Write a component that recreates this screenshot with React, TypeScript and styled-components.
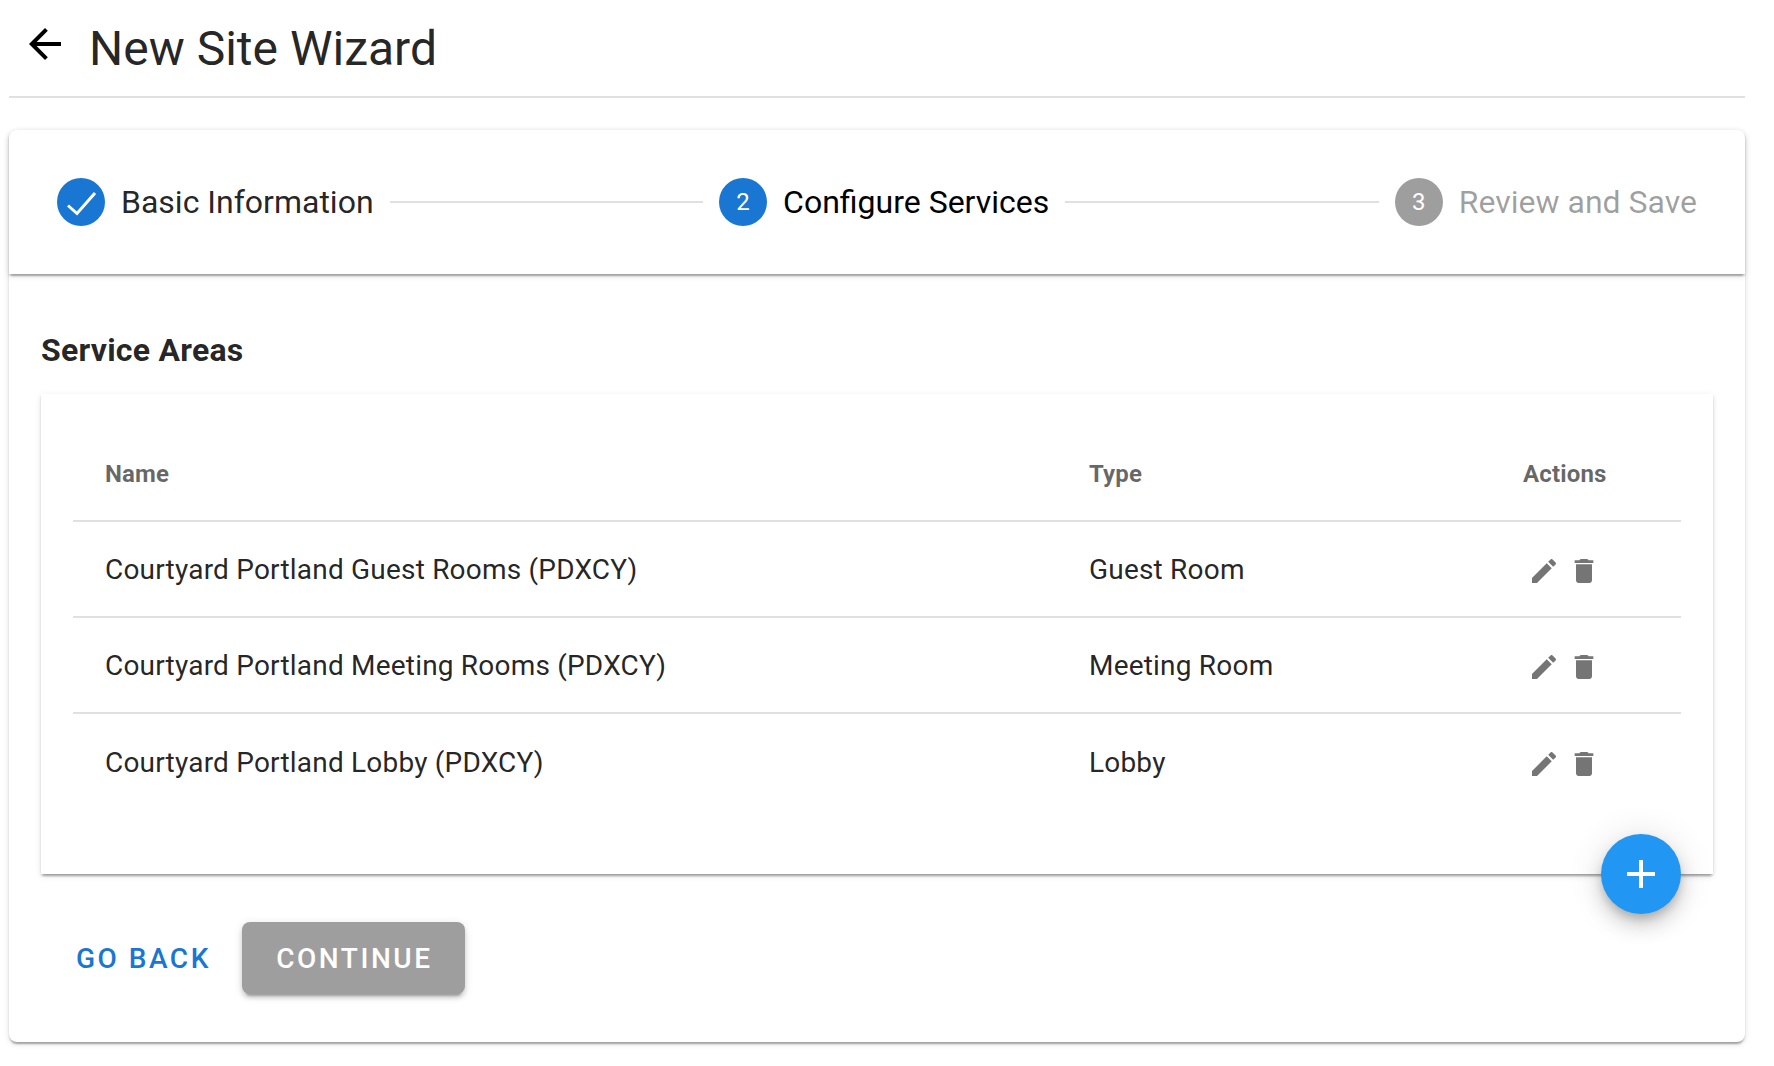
import React from "react";
import styled, { createGlobalStyle } from "styled-components";

const GlobalStyle = createGlobalStyle`
  html, body {
    margin: 0;
    padding: 0;
    background: #fff;
    font-family: Roboto, "Liberation Sans", sans-serif;
    color: rgba(0, 0, 0, 0.87);
  }
`;

const paperShadow = `0 4px 2px -2px rgba(0,0,0,.2), 0 2px 2px 0 rgba(0,0,0,.14), 0 2px 6px 0 rgba(0,0,0,.12)`;

const Page = styled.div`
  box-sizing: border-box;
  width: 1774px;
  height: 1066px;
  padding: 0 29px 0 9px;
  overflow: hidden;
`;

const Header = styled.header`
  display: flex;
  align-items: center;
  height: 96px;
  padding-left: 12px;
  border-bottom: 2px solid #e0e0e0;
  box-sizing: content-box;
`;

const BackIcon = styled.svg`
  width: 48px;
  height: 48px;
  margin-top: -8px;
  fill: #000;
`;

const PageTitle = styled.h1`
  margin: 2px 0 0 20px;
  font-size: 48px;
  font-weight: 400;
  line-height: 96px;
`;

const Wizard = styled.section`
  margin-top: 32px;
  height: 912px;
  border-radius: 8px;
  background: #fff;
  box-shadow: ${paperShadow};
`;

const Stepper = styled.nav`
  display: flex;
  align-items: center;
  box-sizing: border-box;
  height: 144px;
  padding: 0 48px;
  border-radius: 8px 8px 0 0;
  box-shadow: ${paperShadow};
`;

const Step = styled.div`
  display: flex;
  align-items: center;
  gap: 16px;
`;

const StepCircle = styled.div<{ $active: boolean }>`
  display: flex;
  align-items: center;
  justify-content: center;
  width: 48px;
  height: 48px;
  border-radius: 50%;
  font-size: 24px;
  color: #fff;
  background: ${(p) => (p.$active ? "#1976d2" : "#9e9e9e")};
`;

const StepLabel = styled.span<{ $state: "done" | "active" | "todo" }>`
  font-size: 32px;
  line-height: 48px;
  white-space: nowrap;
  color: ${(p) =>
    p.$state === "active"
      ? "#000"
      : p.$state === "done"
      ? "rgba(0,0,0,.87)"
      : "rgba(0,0,0,.38)"};
`;

const Connector = styled.div`
  flex: 1;
  height: 2px;
  margin: 0 16px;
  background: #e0e0e0;
`;

const Content = styled.div`
  padding: 52px 32px 0;
`;

const SectionTitle = styled.h2`
  margin: 0 0 20px;
  font-size: 32px;
  font-weight: 700;
  line-height: 48px;
  letter-spacing: 0.24px;
`;

const TableCard = styled.div`
  position: relative;
  box-sizing: border-box;
  height: 480px;
  padding: 32px 32px 0;
  background: #fff;
  box-shadow: ${paperShadow};
`;

const Row = styled.div<{ $head?: boolean }>`
  display: grid;
  grid-template-columns: 984px 434px 1fr;
  align-items: center;
  box-sizing: border-box;
  height: 96px;
  padding: ${(p) => (p.$head ? "2px" : "0")} 0 0 32px;
  border-bottom: 2px solid #e0e0e0;
  font-size: ${(p) => (p.$head ? "24px" : "28px")};
  font-weight: ${(p) => (p.$head ? 700 : 400)};
  letter-spacing: ${(p) => (p.$head ? "0.17px" : "0.2px")};
  color: ${(p) => (p.$head ? "rgba(0,0,0,.6)" : "rgba(0,0,0,.87)")};

  &:last-of-type {
    border-bottom: none;
  }
`;

const Actions = styled.div`
  display: flex;
  gap: 8px;
  padding: 4px 0 0 5px;
`;

const ActionIcon = styled.svg`
  width: 32px;
  height: 32px;
  fill: #757575;
`;

const Fab = styled.button`
  position: absolute;
  right: 32px;
  bottom: -40px;
  display: flex;
  align-items: center;
  justify-content: center;
  width: 80px;
  height: 80px;
  padding: 0;
  border: none;
  border-radius: 50%;
  background: #2196f3;
  box-shadow: 0 6px 10px -2px rgba(0,0,0,.2), 0 12px 20px 0 rgba(0,0,0,.14), 0 2px 36px 0 rgba(0,0,0,.12);
`;

const FabIcon = styled.svg`
  width: 48px;
  height: 48px;
  fill: #fff;
`;

const Buttons = styled.div`
  display: flex;
  align-items: center;
  gap: 31px;
  margin-top: 48px;
  padding-left: 35px;
`;

const TextButton = styled.button`
  padding: 0;
  border: none;
  background: none;
  font: 500 28px Roboto, sans-serif;
  letter-spacing: 2.5px;
  color: #1976d2;
`;

const ContainedButton = styled.button`
  width: 223px;
  height: 72px;
  padding: 0 0 0 2px;
  border: none;
  border-radius: 8px;
  background: #9e9e9e;
  font: 500 28px Roboto, sans-serif;
  letter-spacing: 2.55px;
  color: #fff;
  box-shadow: 0 6px 2px -4px rgba(0,0,0,.2), 0 4px 4px 0 rgba(0,0,0,.14), 0 2px 10px 0 rgba(0,0,0,.12);
`;

const areas = [
  { name: "Courtyard Portland Guest Rooms (PDXCY)", type: "Guest Room" },
  { name: "Courtyard Portland Meeting Rooms (PDXCY)", type: "Meeting Room" },
  { name: "Courtyard Portland Lobby (PDXCY)", type: "Lobby" },
];

const App = () => {
  return (
    <Page>
      <GlobalStyle />
      <Header>
        <BackIcon viewBox="0 0 24 24">
          <path d="M20 11H7.83l5.59-5.59L12 4l-8 8 8 8 1.41-1.41L7.83 13H20v-2z" />
        </BackIcon>
        <PageTitle>New Site Wizard</PageTitle>
      </Header>
      <Wizard>
        <Stepper>
          <Step>
            <StepCircle $active>
              <svg width="48" height="48" viewBox="0 0 48 48">
                <path d="M11 27.5l9 8 18-20.500" fill="none" stroke="#fff" strokeWidth="3" />
              </svg>
            </StepCircle>
            <StepLabel $state="done">Basic Information</StepLabel>
          </Step>
          <Connector />
          <Step>
            <StepCircle $active>2</StepCircle>
            <StepLabel $state="active">Configure Services</StepLabel>
          </Step>
          <Connector />
          <Step>
            <StepCircle $active={false}>3</StepCircle>
            <StepLabel $state="todo">Review and Save</StepLabel>
          </Step>
        </Stepper>
        <Content>
          <SectionTitle>Service Areas</SectionTitle>
          <TableCard>
            <Row $head>
              <span>Name</span>
              <span>Type</span>
              <span>Actions</span>
            </Row>
            {areas.map((area) => (
              <Row key={area.name}>
                <span>{area.name}</span>
                <span>{area.type}</span>
                <Actions>
                  <ActionIcon viewBox="0 0 24 24">
                    <path d="M3 17.25V21h3.75L17.81 9.94l-3.75-3.75L3 17.25zM20.71 7.04c.39-.39.39-1.02 0-1.41l-2.34-2.34c-.39-.39-1.02-.39-1.41 0l-1.83 1.83 3.75 3.75 1.83-1.83z" />
                  </ActionIcon>
                  <ActionIcon viewBox="0 0 24 24">
                    <path d="M6 19c0 1.1.9 2 2 2h8c1.1 0 2-.9 2-2V7H6v12zM19 4h-3.500l-1-1h-5l-1 1H5v2h14V4z" />
                  </ActionIcon>
                </Actions>
              </Row>
            ))}
            <Fab>
              <FabIcon viewBox="0 0 24 24">
                <path d="M19 13h-6v6h-2v-6H5v-2h6V5h2v6h6v2z" />
              </FabIcon>
            </Fab>
          </TableCard>
          <Buttons>
            <TextButton>GO BACK</TextButton>
            <ContainedButton>CONTINUE</ContainedButton>
          </Buttons>
        </Content>
      </Wizard>
    </Page>
  );
};

export default App;
